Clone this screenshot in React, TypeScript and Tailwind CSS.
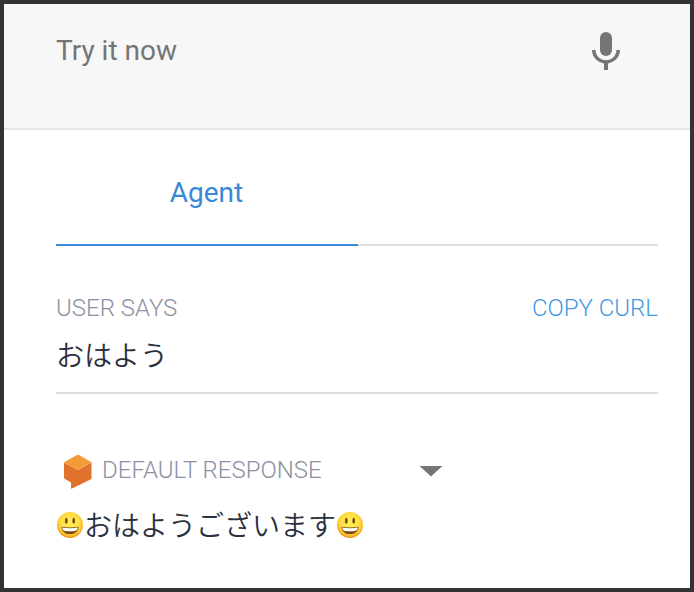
function Smiley() {
  return (
    <svg viewBox="0 0 28 28" className="mb-1 h-7 w-7 shrink-0" role="img" aria-label="😃">
      <defs>
        <radialGradient id="face" cx="50%" cy="42%" r="58%">
          <stop offset="0" stopColor="#fff15c" />
          <stop offset="0.6" stopColor="#ffdf42" />
          <stop offset="0.85" stopColor="#fdbd2b" />
          <stop offset="1" stopColor="#e88616" />
        </radialGradient>
      </defs>
      <circle cx="14" cy="14" r="13" fill="url(#face)" />
      <ellipse cx="10.3" cy="9.8" rx="1.35" ry="3" fill="#7a450c" />
      <ellipse cx="17.7" cy="9.8" rx="1.35" ry="3" fill="#7a450c" />
      <path d="M5.3 15.8Q14 17.3 22.7 15.8Q22 23.2 14 23.2Q6 23.2 5.3 15.8Z" fill="#7c4a14" />
      <path d="M6.1 16.5Q14 18 21.9 16.5Q21.4 19.5 20 19.8Q14 20.8 8 19.8Q6.6 19.5 6.1 16.5Z" fill="#fff" />
    </svg>
  );
}

export default function App() {
  return (
    <main className="h-[592px] w-[694px] border-4 border-[#343333] bg-white font-['Roboto','Noto_Sans_CJK_JP',sans-serif]">
      <header className="flex h-[126px] items-start justify-between border-b-2 border-[#e5e5e5] bg-[#f7f7f7] pr-[60px] pl-[52px]">
        <h1 className="mt-[27px] text-[28px] leading-10 text-[#757575]">Try it now</h1>
        <svg viewBox="0 0 48 48" className="mt-[22px] h-12 w-12" fill="#757575" aria-label="Microphone">
          <rect x="18" y="6" width="12" height="24" rx="6" />
          <path d="M10 24H13.6C13.6 30 18.2 34.2 24 34.2S34.4 30 34.4 24H38C38 31 32.7 36.3 26 37.4V44H22V37.4C15.3 36.3 10 31 10 24Z" />
        </svg>
      </header>
      <div className="pr-8 pl-[52px]">
        <nav className="flex h-[116px]">
          <button className="w-[302px] border-b-2 border-[#3989d8] pt-3 pr-px text-center text-[28px] text-[#3989d8]">Agent</button>
          <div className="flex-1 border-b-2 border-[#dedede]" />
        </nav>
        <section className="h-[148px] border-b-2 border-[#dedede] pt-[42px]">
          <div className="flex justify-between text-2xl leading-10 font-light">
            <h2 className="text-[#8b90a0]">USER SAYS</h2>
            <button className="text-[#4398df]">COPY CURL</button>
          </div>
          <p className="mt-[9px] text-[28px] leading-10 font-[350] text-[#2b303e]">おはよう</p>
        </section>
        <section className="pt-14">
          <div className="flex h-10 items-center">
            <svg viewBox="0 0 30 36" className="mt-[3px] ml-[7px] h-9 w-[30px]">
              <path d="M1 8.5L15 16L28.5 8.5V24Q28.5 25 27.5 25.5L9 34.5Q8 35 8 34V28.5L2 25Q1 24.5 1 23.5Z" fill="#e1722b" />
              <path d="M1 8.2L14 1Q15 .5 16 1L28.5 8.2L15 16Z" fill="#f29b37" />
            </svg>
            <h2 className="ml-[9px] w-[317px] text-2xl font-light text-[#8b90a0]">DEFAULT RESPONSE</h2>
            <svg viewBox="0 0 24 12" className="mt-[2px] h-3 w-6" fill="#757575"><path d="M0.5 1H23.5L12 11.5Z" /></svg>
          </div>
          <p className="mt-[17px] flex h-10 items-center text-[28px] leading-10 font-[350] text-[#2b303e]">
            <Smiley />
            <span>おはようございます</span>
            <Smiley />
          </p>
        </section>
      </div>
    </main>
  );
}
